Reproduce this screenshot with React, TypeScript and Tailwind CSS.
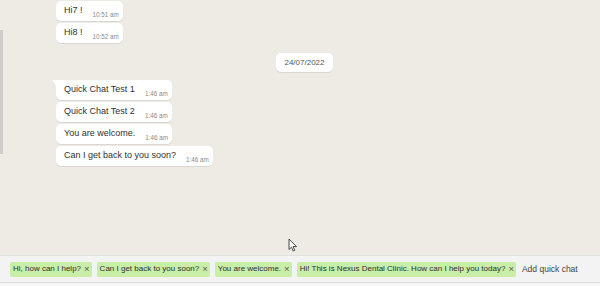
const font = { fontFamily: '"Liberation Sans", Arial, sans-serif' };

type Msg = { text: string; time: string; tail?: boolean };

const earlier: Msg[] = [
  { text: 'Hi7 !', time: '10:51 am' },
  { text: 'Hi8 !', time: '10:52 am' },
];

const today: Msg[] = [
  { text: 'Quick Chat Test 1', time: '1:46 am', tail: true },
  { text: 'Quick Chat Test 2', time: '1:46 am' },
  { text: 'You are welcome.', time: '1:46 am' },
  { text: 'Can I get back to you soon?', time: '1:46 am' },
];

const quickChats = [
  'Hi, how can I help?',
  'Can I get back to you soon?',
  'You are welcome.',
  'Hi! This is Nexus Dental Clinic. How can I help you today?',
];

function Bubble({ msg }: { msg: Msg }) {
  return (
    <div
      className={`relative flex items-end bg-white h-[20px] pl-[8px] pr-[4px] rounded-[5px] shadow-[0_1px_0.5px_rgba(0,0,0,0.08)] ${
        msg.tail ? 'rounded-tl-none' : ''
      }`}
    >
      {msg.tail && (
        <span className="absolute left-[-4px] top-0 w-0 h-0 border-t-[6px] border-t-white border-l-[4px] border-l-transparent" />
      )}
      <span className="text-[9px] leading-[18px] text-[#303030] self-start">{msg.text}</span>
      <span className="text-[6.3px] leading-[9px] text-[#8a8a8a] ml-[10px] mb-[2px] whitespace-nowrap">{msg.time}</span>
    </div>
  );
}

function Cursor() {
  return (
    <svg className="absolute left-[288px] top-[238px]" width="10" height="14" viewBox="0 0 10 14">
      <path
        d="M1 1 L1 11.5 L3.5 9.2 L5.2 13 L6.8 12.3 L5.1 8.6 L8.5 8.6 Z"
        fill="#fff"
        stroke="#333"
        strokeWidth="0.9"
        strokeLinejoin="round"
      />
    </svg>
  );
}

export default function App() {
  return (
    <div className="relative w-[600px] h-[286px] overflow-hidden bg-[#f5f5f4]" style={font}>
      <div className="relative h-[255px] bg-[#eeebe5] pl-[56px] pt-[1px]">
        <span className="absolute left-0 top-[30px] w-[3px] h-[124px] bg-[#cfcdca]" />
        <div className="flex flex-col items-start gap-[2px]">
          {earlier.map((m) => (
            <Bubble key={m.text} msg={m} />
          ))}
        </div>
        <div className="flex justify-center mt-[10px] mb-[8px] pr-[47px]">
          <div className="bg-white rounded-[5px] px-[8px] h-[19px] flex items-center text-[8px] text-[#555] shadow-[0_1px_0.5px_rgba(0,0,0,0.08)]">
            24/07/2022
          </div>
        </div>
        <div className="flex flex-col items-start gap-[2px]">
          {today.map((m) => (
            <Bubble key={m.text} msg={m} />
          ))}
        </div>
        <Cursor />
      </div>
      <div className="border-t border-[#e2e2e2] h-[28px] flex items-center gap-[5px] pl-[10px] bg-[#f3f3f3] border-b border-b-[#dedede]">
        {quickChats.map((q) => (
          <div
            key={q}
            className="flex items-center h-[15px] bg-[#c9eea8] rounded-[2px] pl-[3px] pr-[2px] text-[8px] text-[#2d2d2d] whitespace-nowrap"
          >
            {q}
            <span className="ml-[3px] text-[9.5px] leading-none text-[#555]">×</span>
          </div>
        ))}
        <span className="ml-[1px] text-[8.5px] text-[#444] whitespace-nowrap">Add quick chat</span>
      </div>
    </div>
  );
}
